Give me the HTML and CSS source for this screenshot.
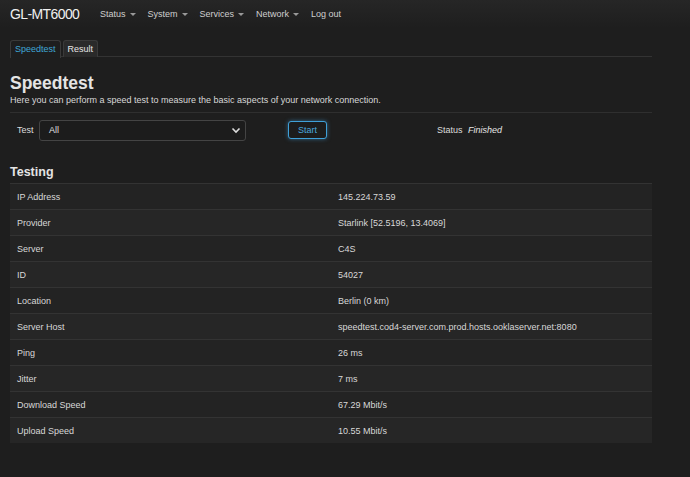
FILE: index.html
```html
<!DOCTYPE html>
<html>
<head>
<meta charset="utf-8">
<link rel="stylesheet" href="styles.css">
</head>
<body>
<header class="topbar">
  <span class="brand">GL-MT6000</span>
  <nav class="menu">
    <span class="menu-item">Status <span class="caret"></span></span>
    <span class="menu-item">System <span class="caret"></span></span>
    <span class="menu-item">Services <span class="caret"></span></span>
    <span class="menu-item">Network <span class="caret"></span></span>
    <span class="menu-item">Log out</span>
  </nav>
</header>
<main class="content">
  <ul class="tabs">
    <li class="tab active">Speedtest</li>
    <li class="tab">Result</li>
  </ul>
  <h2 class="title">Speedtest</h2>
  <p class="desc">Here you can perform a speed test to measure the basic aspects of your network connection.</p>
  <div class="controls">
    <label class="lbl">Test</label>
    <div class="select">
      <span>All</span>
      <svg width="10" height="7" viewBox="0 0 10 7"><path d="M1.5 1.5 L5 5 L8.5 1.5" fill="none" stroke="#ddd" stroke-width="1.6"/></svg>
    </div>
    <button class="btn">Start</button>
    <div class="status"><span>Status</span> <em>Finished</em></div>
  </div>
  <h3 class="section">Testing</h3>
  <div class="table">
    <div class="row"><div class="k">IP Address</div><div class="v">145.224.73.59</div></div>
    <div class="row"><div class="k">Provider</div><div class="v">Starlink [52.5196, 13.4069]</div></div>
    <div class="row"><div class="k">Server</div><div class="v">C4S</div></div>
    <div class="row"><div class="k">ID</div><div class="v">54027</div></div>
    <div class="row"><div class="k">Location</div><div class="v">Berlin (0 km)</div></div>
    <div class="row"><div class="k">Server Host</div><div class="v">speedtest.cod4-server.com.prod.hosts.ooklaserver.net:8080</div></div>
    <div class="row"><div class="k">Ping</div><div class="v">26 ms</div></div>
    <div class="row"><div class="k">Jitter</div><div class="v">7 ms</div></div>
    <div class="row"><div class="k">Download Speed</div><div class="v">67.29 Mbit/s</div></div>
    <div class="row"><div class="k">Upload Speed</div><div class="v">10.55 Mbit/s</div></div>
  </div>
</main>
</body>
</html>
```
FILE: styles.css
```css
html, body {
  margin: 0;
  padding: 0;
  background: #1e1e1e;
  color: #dcdcdc;
  font-family: "Liberation Sans", Arial, sans-serif;
  font-size: 9px;
  height: 100%;
}
.topbar {
  height: 28px;
  display: flex;
  align-items: center;
  padding-left: 10px;
  background: linear-gradient(#262626, #1e1e1e);
}
.brand {
  font-size: 14px;
  color: #f0f0f0;
  letter-spacing: -0.6px;
  width: 90px;
}
.menu {
  display: flex;
  gap: 12px;
  font-size: 9px;
  color: #cfcfcf;
}
.menu-item {
  display: inline-flex;
  align-items: center;
  gap: 4px;
}
.caret {
  width: 0;
  height: 0;
  border-left: 3px solid transparent;
  border-right: 3px solid transparent;
  border-top: 3px solid #999;
}
.content {
  padding: 12px 0 0 10px;
  width: 642px;
}
.tabs {
  list-style: none;
  margin: 0;
  padding: 0;
  display: flex;
  gap: 2px;
  border-bottom: 1px solid #333;
  height: 16px;
}
.tab {
  padding: 0 4px;
  height: 16px;
  line-height: 17px;
  font-size: 9px;
  color: #e6e6e6;
  background: #2a2a2a;
  border: 1px solid #3a3a3a;
  border-bottom: none;
  border-radius: 3px 3px 0 0;
}
.tab.active {
  color: #3fa7d6;
  background: #1e1e1e;
  height: 17px;
}
.title {
  margin: 16px 0 0;
  font-size: 17.5px;
  font-weight: bold;
  color: #e4e4e4;
  line-height: 20px;
}
.desc {
  margin: 2px 0 0;
  font-size: 9px;
  color: #d8d8d8;
  line-height: 11px;
  padding-bottom: 6px;
  border-bottom: 1px solid #2f2f2f;
}
.controls {
  display: flex;
  align-items: center;
  height: 20px;
  margin-top: 7px;
}
.lbl {
  width: 22px;
  padding-left: 7px;
}
.select {
  width: 192px;
  height: 19px;
  border: 1px solid #444;
  border-radius: 3px;
  background: #1c1c1c;
  display: flex;
  align-items: center;
  justify-content: space-between;
  padding: 0 4px 0 9px;
  font-size: 9px;
  color: #e0e0e0;
}
.btn {
  margin-left: 42px;
  width: 39px;
  height: 18px;
  border: 1px solid #3fa0d8;
  border-radius: 3px;
  background: #1c1c1c;
  color: #4aa8de;
  font-family: inherit;
  font-size: 9px;
  padding: 0;
  box-shadow: 0 0 4px rgba(70, 160, 220, 0.55);
}
.status {
  margin-left: 110px;
  color: #dcdcdc;
}
.status em {
  margin-left: 3px;
  font-style: italic;
  color: #e6e6e6;
}
.section {
  margin: 25px 0 0;
  font-size: 12.5px;
  font-weight: bold;
  color: #e4e4e4;
  line-height: 15px;
  padding-bottom: 3px;
  border-bottom: 1px solid #333;
}
.table {
  display: flex;
  flex-direction: column;
}
.row {
  display: grid;
  grid-template-columns: 328px 1fr;
  height: 25px;
  align-items: center;
  background: #232323;
  border-bottom: 1px solid #333;
}
.row:nth-child(even) {
  background: #262626;
}
.row:last-child {
  border-bottom: none;
}
.k {
  padding-left: 7px;
  color: #d8d8d8;
}
.v {
  color: #d8d8d8;
}
```
